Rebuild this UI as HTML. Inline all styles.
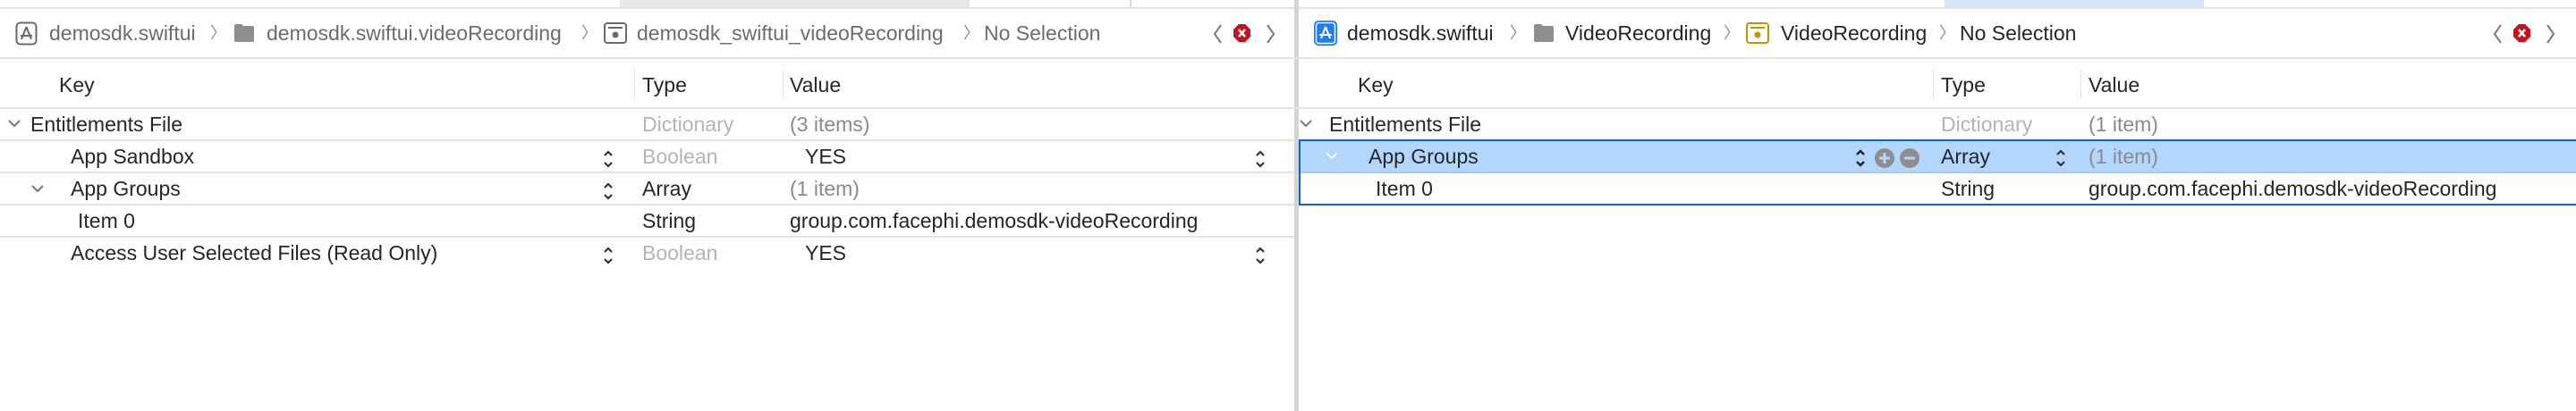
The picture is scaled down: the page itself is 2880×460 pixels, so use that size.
<!DOCTYPE html>
<html><head><meta charset="utf-8"><style>
*{margin:0;padding:0;box-sizing:border-box}
body{width:2880px;height:460px;background:#fff;position:relative;overflow:hidden;font-family:"Liberation Sans",sans-serif;font-size:23px;color:#262626}
.a{position:absolute;white-space:nowrap}
.t{position:absolute;white-space:nowrap;line-height:36px;height:36px}
.hl{position:absolute;height:2px;background:#e4e4e4}
.g{color:#b4b4b4}.m{color:#8a8a8a}
.bc{position:absolute;white-space:nowrap;line-height:54px;top:10px}
svg{position:absolute}
</style></head><body>
<!-- top strip -->
<div class="a" style="left:693px;top:0;width:391px;height:8px;background:#e8e8e8"></div>
<div class="a" style="left:1263px;top:0;width:2px;height:8px;background:#ddd"></div>
<div class="a" style="left:2174px;top:0;width:290px;height:8px;background:#d3e5fb"></div>
<div class="hl" style="left:0;top:8px;width:2880px"></div>
<!-- divider -->
<div class="a" style="left:1447px;top:0;width:5px;height:460px;background:#d4d4d4"></div>

<!-- LEFT breadcrumb -->
<svg style="left:17px;top:24px" width="26" height="28" viewBox="0 0 26 28"><rect x="1.5" y="1.5" width="22" height="24" rx="4" fill="none" stroke="#6a6a6a" stroke-width="2"/><path d="M12.5 6 L7 20 M12.5 6 L18 20 M6 16 H19" stroke="#6a6a6a" stroke-width="2" fill="none"/></svg>
<div class="bc" style="left:55px;color:#6c6c6c">demosdk.swiftui</div>
<div class="bc" style="left:235px;color:#8a8a8a;font-size:18px">〉</div>
<svg style="left:261px;top:26px" width="24" height="22" viewBox="0 0 24 22"><path d="M1 3 Q1 1 3 1 H9 L11 3 H21 Q23 3 23 5 V19 Q23 21 21 21 H3 Q1 21 1 19Z" fill="#8e8e8e"/></svg>
<div class="bc" style="left:298px;color:#6c6c6c">demosdk.swiftui.videoRecording</div>
<div class="bc" style="left:650px;color:#8a8a8a;font-size:18px">〉</div>
<svg style="left:675px;top:25px" width="26" height="24" viewBox="0 0 26 24"><rect x="1" y="1" width="24" height="22" rx="3" fill="none" stroke="#6a6a6a" stroke-width="2"/><path d="M5 6 H21" stroke="#6a6a6a" stroke-width="2"/><circle cx="13" cy="14" r="3.5" fill="#6a6a6a"/></svg>
<div class="bc" style="left:712px;color:#6c6c6c">demosdk_swiftui_videoRecording</div>
<div class="bc" style="left:1077px;color:#8a8a8a;font-size:18px">〉</div>
<div class="bc" style="left:1100px;color:#6c6c6c">No Selection</div>
<svg style="left:1355px;top:24px" width="70" height="28" viewBox="0 0 70 28"><path d="M10 4 L3 14 L10 24" stroke="#7a7a7a" stroke-width="2" fill="none"/><path d="M30 3 L37 3 L43 9 L43 17 L37 23 L30 23 L24 17 L24 9Z" fill="#c8101e"/><path d="M30 9 L37 17 M37 9 L30 17" stroke="#fff" stroke-width="2.6"/><path d="M62 4 L69 14 L62 24" stroke="#7a7a7a" stroke-width="2" fill="none"/></svg>
<div class="hl" style="left:0;top:64px;width:2880px"></div>

<!-- RIGHT breadcrumb -->
<svg style="left:1469px;top:23px" width="26" height="28" viewBox="0 0 26 28"><rect x="0" y="0" width="26" height="28" rx="5" fill="#1f7cf2"/><rect x="2.5" y="2.5" width="21" height="23" rx="3" fill="none" stroke="#fff" stroke-width="1.5"/><path d="M13 7 L8 20 M13 7 L18 20 M6 16 H20" stroke="#fff" stroke-width="2" fill="none"/></svg>
<div class="bc" style="left:1506px">demosdk.swiftui</div>
<div class="bc" style="left:1688px;color:#8a8a8a;font-size:18px">〉</div>
<svg style="left:1714px;top:26px" width="24" height="22" viewBox="0 0 24 22"><path d="M1 3 Q1 1 3 1 H9 L11 3 H21 Q23 3 23 5 V19 Q23 21 21 21 H3 Q1 21 1 19Z" fill="#8e8e8e"/></svg>
<div class="bc" style="left:1750px">VideoRecording</div>
<div class="bc" style="left:1927px;color:#8a8a8a;font-size:18px">〉</div>
<svg style="left:1952px;top:25px" width="26" height="24" viewBox="0 0 26 24"><rect x="1" y="1" width="24" height="22" rx="3" fill="none" stroke="#c29400" stroke-width="2"/><path d="M5 6 H21" stroke="#c29400" stroke-width="2"/><circle cx="13" cy="14" r="3.5" fill="#c29400"/></svg>
<div class="bc" style="left:1991px">VideoRecording</div>
<div class="bc" style="left:2168px;color:#8a8a8a;font-size:18px">〉</div>
<div class="bc" style="left:2191px">No Selection</div>
<svg style="left:2786px;top:24px" width="70" height="28" viewBox="0 0 70 28"><path d="M10 4 L3 14 L10 24" stroke="#7a7a7a" stroke-width="2" fill="none"/><path d="M30 3 L37 3 L43 9 L43 17 L37 23 L30 23 L24 17 L24 9Z" fill="#c8101e"/><path d="M30 9 L37 17 M37 9 L30 17" stroke="#fff" stroke-width="2.6"/><path d="M62 4 L69 14 L62 24" stroke="#7a7a7a" stroke-width="2" fill="none"/></svg>

<!-- headers -->
<div class="t" style="left:66px;top:77px">Key</div>
<div class="a" style="left:709px;top:78px;width:1px;height:32px;background:#e2e2e2"></div>
<div class="t" style="left:718px;top:77px">Type</div>
<div class="a" style="left:875px;top:78px;width:1px;height:32px;background:#e2e2e2"></div>
<div class="t" style="left:883px;top:77px">Value</div>
<div class="t" style="left:1518px;top:77px">Key</div>
<div class="a" style="left:2161px;top:78px;width:1px;height:32px;background:#e2e2e2"></div>
<div class="t" style="left:2170px;top:77px">Type</div>
<div class="a" style="left:2326px;top:78px;width:1px;height:32px;background:#e2e2e2"></div>
<div class="t" style="left:2335px;top:77px">Value</div>
<div class="hl" style="left:0;top:120px;width:2880px"></div>

<!-- LEFT rows -->
<svg style="left:8px;top:133px" width="16" height="10"><path d="M2 2 L8 8 L14 2" stroke="#777" stroke-width="2" fill="none"/></svg>
<div class="t" style="left:34px;top:121px">Entitlements File</div>
<div class="t g" style="left:718px;top:121px">Dictionary</div>
<div class="t m" style="left:883px;top:121px">(3 items)</div>
<div class="hl" style="left:0;top:156px;width:1447px"></div>

<div class="t" style="left:79px;top:157px">App Sandbox</div>
<svg style="left:674px;top:167px" width="12" height="22"><path d="M2 7 L6 3 L10 7 M2 15 L6 19 L10 15" stroke="#333" stroke-width="2.2" fill="none"/></svg>
<div class="t g" style="left:718px;top:157px">Boolean</div>
<div class="t" style="left:900px;top:157px">YES</div>
<svg style="left:1403px;top:167px" width="12" height="22"><path d="M2 7 L6 3 L10 7 M2 15 L6 19 L10 15" stroke="#333" stroke-width="2.2" fill="none"/></svg>
<div class="hl" style="left:0;top:192px;width:1447px"></div>

<svg style="left:34px;top:206px" width="16" height="10"><path d="M2 2 L8 8 L14 2" stroke="#777" stroke-width="2" fill="none"/></svg>
<div class="t" style="left:79px;top:193px">App Groups</div>
<svg style="left:674px;top:203px" width="12" height="22"><path d="M2 7 L6 3 L10 7 M2 15 L6 19 L10 15" stroke="#333" stroke-width="2.2" fill="none"/></svg>
<div class="t" style="left:718px;top:193px">Array</div>
<div class="t m" style="left:883px;top:193px">(1 item)</div>
<div class="hl" style="left:0;top:228px;width:1447px"></div>

<div class="t" style="left:87px;top:229px">Item 0</div>
<div class="t" style="left:718px;top:229px">String</div>
<div class="t" style="left:883px;top:229px">group.com.facephi.demosdk-videoRecording</div>
<div class="hl" style="left:0;top:264px;width:1447px"></div>

<div class="t" style="left:79px;top:265px">Access User Selected Files (Read Only)</div>
<svg style="left:674px;top:275px" width="12" height="22"><path d="M2 7 L6 3 L10 7 M2 15 L6 19 L10 15" stroke="#333" stroke-width="2.2" fill="none"/></svg>
<div class="t g" style="left:718px;top:265px">Boolean</div>
<div class="t" style="left:900px;top:265px">YES</div>
<svg style="left:1403px;top:275px" width="12" height="22"><path d="M2 7 L6 3 L10 7 M2 15 L6 19 L10 15" stroke="#333" stroke-width="2.2" fill="none"/></svg>

<!-- RIGHT rows -->
<svg style="left:1452px;top:133px" width="16" height="10"><path d="M2 2 L8 8 L14 2" stroke="#777" stroke-width="2" fill="none"/></svg>
<div class="t" style="left:1486px;top:121px">Entitlements File</div>
<div class="t g" style="left:2170px;top:121px">Dictionary</div>
<div class="t m" style="left:2335px;top:121px">(1 item)</div>

<div class="a" style="left:1452px;top:156px;width:1428px;height:74px;border:2px solid #0b62d6;border-right:none"></div>
<div class="a" style="left:1454px;top:158px;width:1426px;height:34px;background:#b3d6fd"></div>
<div class="a" style="left:1454px;top:192px;width:1426px;height:2px;background:#a9c7ea"></div>
<svg style="left:1481px;top:169px" width="16" height="10"><path d="M2 2 L8 8 L14 2" stroke="#f4f8ff" stroke-width="2" fill="none"/></svg>
<div class="t" style="left:1530px;top:157px">App Groups</div>
<svg style="left:2074px;top:165px" width="12" height="24"><path d="M2 8 L6 4 L10 8 M2 16 L6 20 L10 16" stroke="#222" stroke-width="2.4" fill="none"/></svg>
<svg style="left:2096px;top:165px" width="52" height="24" viewBox="0 0 52 24"><circle cx="11" cy="12" r="11" fill="#8e8e8e"/><path d="M11 6 V18 M5 12 H17" stroke="#b3d6fd" stroke-width="3"/><circle cx="39" cy="12" r="11" fill="#8e8e8e"/><path d="M33 12 H45" stroke="#b3d6fd" stroke-width="3"/></svg>
<div class="t" style="left:2170px;top:157px">Array</div>
<svg style="left:2298px;top:165px" width="12" height="24"><path d="M2 8 L6 4 L10 8 M2 16 L6 20 L10 16" stroke="#333" stroke-width="2.2" fill="none"/></svg>
<div class="t m" style="left:2335px;top:157px">(1 item)</div>

<div class="t" style="left:1538px;top:193px">Item 0</div>
<div class="t" style="left:2170px;top:193px">String</div>
<div class="t" style="left:2335px;top:193px">group.com.facephi.demosdk-videoRecording</div>
</body></html>
